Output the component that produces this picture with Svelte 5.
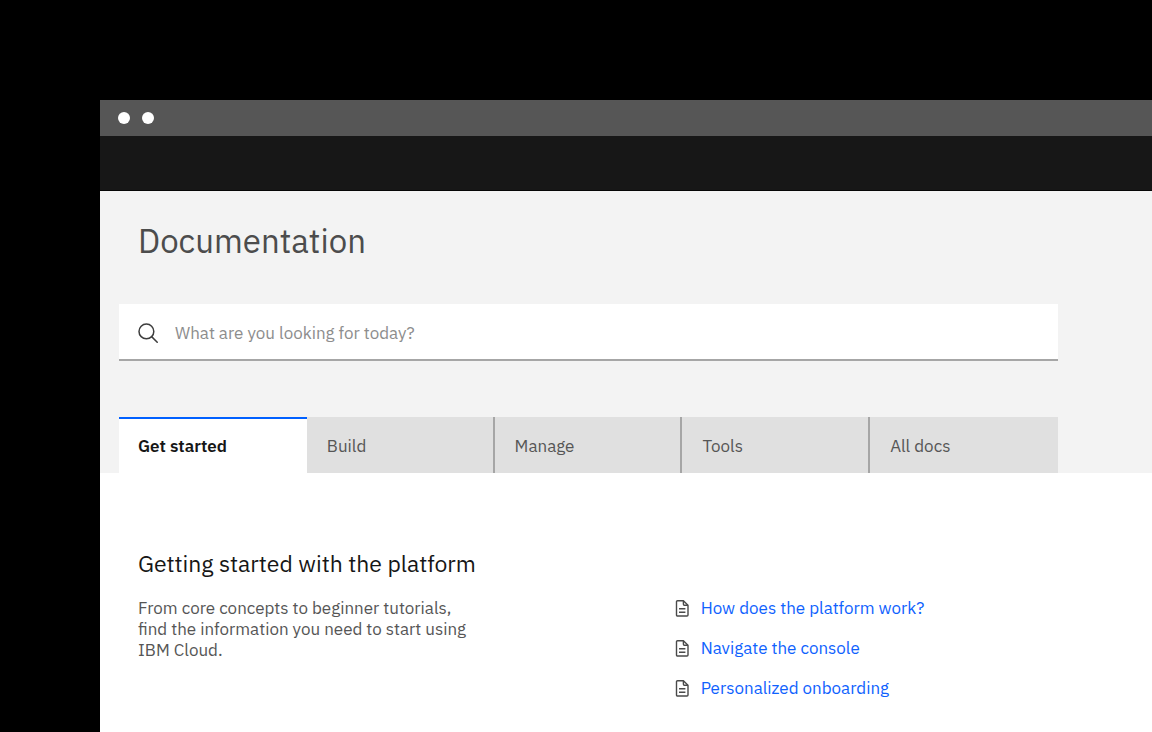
<script>
  const tabs = ['Get started', 'Build', 'Manage', 'Tools', 'All docs'];
  const links = ['How does the platform work?', 'Navigate the console', 'Personalized onboarding'];
  let active = $state(0);
</script>

<div class="stage">
  <div class="window">
    <div class="titlebar"><span class="dot"></span><span class="dot"></span></div>
    <div class="navbar"></div>
    <header class="masthead">
      <h1>Documentation</h1>
      <label class="search">
        <svg width="20" height="20" viewBox="0 0 20 20" fill="none" stroke="#3d3d3d" stroke-width="1.5" aria-hidden="true">
          <circle cx="8.4" cy="8.4" r="7.4" />
          <path d="M13.6 13.6l6.1 6.1" />
        </svg>
        <input type="search" aria-label="Search documentation" placeholder="What are you looking for today?" />
      </label>
      <div class="tabs" role="tablist">
        {#each tabs as tab, i}
          <button role="tab" class:active={active === i} aria-selected={active === i} onclick={() => (active = i)}>{tab}</button>
        {/each}
      </div>
    </header>
    <main>
      <section>
        <h2>Getting started with the platform</h2>
        <div class="columns">
          <p>From core concepts to beginner tutorials, find the information you need to start using IBM Cloud.</p>
          <ul>
            {#each links as link}
              <li>
                <svg width="14" height="17" viewBox="0 0 14 17" fill="none" stroke="#4a4a4a" stroke-width="1.4" stroke-linejoin="round" aria-hidden="true">
                  <path d="M2.5 .8h5.9l4.6 4.4v9.8a1 1 0 0 1-1 1H2.5a1 1 0 0 1-1-1V1.8a1 1 0 0 1 1-1z" />
                  <path d="M8.4 .8v3.4a1 1 0 0 0 1 1H13M4 8.8h6.4M4 12.2h6.4" />
                </svg>
                <a href="#docs">{link}</a>
              </li>
            {/each}
          </ul>
        </div>
      </section>
    </main>
  </div>
</div>

<style>
  :global(body) {
    background: #000;
  }
  .stage {
    display: flex;
    box-sizing: border-box;
    min-height: 100vh;
    padding: 100px 0 0 100px;
    background: #000;
    font-family: 'IBM Plex Sans', 'Noto Sans', sans-serif;
    font-size: 17px;
    line-height: 21px;
    color: #565656;
  }
  .window {
    flex: 1;
    min-width: 0;
    display: flex;
    flex-direction: column;
    background: #fff;
  }
  .titlebar {
    display: flex;
    align-items: center;
    gap: 12px;
    height: 36px;
    padding: 0 18px;
    background: #565656;
  }
  .dot {
    width: 12px;
    height: 12px;
    border-radius: 50%;
    background: #fff;
  }
  .navbar {
    height: 55px;
    background: #171717;
    border-bottom: 1px solid #060606;
    box-sizing: border-box;
  }
  .masthead {
    padding: 28px 94px 0 19px;
    background: #f3f3f3;
  }
  h1 {
    margin: 0;
    padding-left: 19px;
    font-size: 33px;
    font-weight: 400;
    line-height: 44px;
    color: #4c4c4c;
  }
  .search {
    display: flex;
    align-items: center;
    gap: 17px;
    height: 57px;
    margin-top: 41px;
    padding: 3px 19px 0;
    box-sizing: border-box;
    background: #fff;
    border-bottom: 2px solid #a6a6a6;
  }
  input {
    flex: 1;
    min-width: 0;
    padding: 0;
    border: 0;
    outline: 0;
    background: none;
    font: inherit;
    color: #161616;
  }
  input::placeholder {
    color: #8d8d8d;
    opacity: 1;
  }
  .tabs {
    display: grid;
    grid-template-columns: repeat(5, 1fr);
    margin-top: 56px;
  }
  button {
    height: 56px;
    padding: 2px 20px 0;
    border: 0;
    border-right: 2px solid #a6a6a6;
    background: #e0e0e0;
    font: inherit;
    text-align: left;
    color: #565656;
    cursor: pointer;
  }
  button:first-child {
    padding-left: 19px;
  }
  button:last-child {
    border-right: 0;
  }
  button.active {
    border-right: 0;
    background: #fff;
    box-shadow: inset 0 2px #0060ff;
    font-weight: 600;
    color: #161616;
  }
  main {
    padding: 74px 94px 24px 38px;
  }
  h2 {
    margin: 0;
    font-size: 23px;
    font-weight: 400;
    line-height: 32px;
    color: #161616;
  }
  .columns {
    display: grid;
    grid-template-columns: 7fr 5fr;
    margin-top: 19px;
  }
  p {
    margin: 0;
    max-width: 340px;
  }
  ul {
    display: grid;
    gap: 19px;
    margin: 0;
    padding: 0;
    list-style: none;
  }
  li {
    display: flex;
    align-items: center;
    gap: 12px;
  }
  a {
    color: #0f62fe;
    text-decoration: none;
  }
</style>
